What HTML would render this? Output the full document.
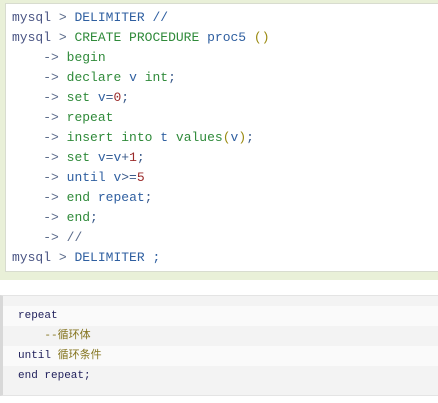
<!DOCTYPE html>
<html><head><meta charset="utf-8"><style>
body{margin:0;width:438px;height:403px;background:#fff;position:relative;overflow:hidden;font-family:"Liberation Mono","Noto Sans CJK SC",monospace}
.outer{position:absolute;left:0;top:0;width:438px;height:280px;background:#e9f0d8}
.inner{position:absolute;left:5px;top:3px;width:440px;height:269px;background:#fff;border:1px solid #d8dccf;box-sizing:border-box}
.code{position:absolute;left:12px;top:8px;font-size:13px;line-height:20px;white-space:pre;color:#3a5a8a}
.m{color:#4a5584}.b{color:#2f5fa0}.g{color:#2f8a3a}.o{color:#9a8a10}.r{color:#9a2a2a}.a{color:#5a6a8a}
.blk{position:absolute;left:0;top:295px;width:438px;height:101px;background:#f3f3f3;border-top:1px solid #e4e4e4;border-bottom:1px solid #e4e4e4;border-left:3px solid #d8d8d8;box-sizing:border-box}
.row{position:absolute;left:0;width:438px;height:20px}
.t{position:absolute;left:18px;top:306px;font-size:11px;line-height:20px;white-space:pre;color:#1e1e5a}
.c{color:#857520}
</style></head><body>
<div class="outer"><div class="inner"></div></div>
<div class="code"><span class="m">mysql</span> <span class="a">&gt;</span> <span class="b">DELIMITER //</span>
<span class="m">mysql</span> <span class="a">&gt;</span> <span class="g">CREATE PROCEDURE</span> <span class="b">proc5</span> <span class="o">()</span>
    <span class="a">-&gt;</span> <span class="g">begin</span>
    <span class="a">-&gt;</span> <span class="g">declare</span> <span class="b">v</span> <span class="g">int</span>;
    <span class="a">-&gt;</span> <span class="g">set</span> <span class="b">v</span>=<span class="r">0</span>;
    <span class="a">-&gt;</span> <span class="g">repeat</span>
    <span class="a">-&gt;</span> <span class="g">insert into</span> <span class="b">t</span> <span class="g">values</span><span class="o">(</span><span class="b">v</span><span class="o">)</span>;
    <span class="a">-&gt;</span> <span class="g">set</span> <span class="b">v</span>=<span class="b">v</span>+<span class="r">1</span>;
    <span class="a">-&gt;</span> <span class="b">until v</span>&gt;=<span class="r">5</span>
    <span class="a">-&gt;</span> <span class="g">end</span> <span class="b">repeat</span>;
    <span class="a">-&gt;</span> <span class="g">end</span>;
    <span class="a">-&gt;</span> <span class="a">//</span>
<span class="m">mysql</span> <span class="a">&gt;</span> <span class="b">DELIMITER ;</span></div>
<div class="blk">
<div class="row" style="top:10px;background:#fafafa"></div>
<div class="row" style="top:30px;background:#f3f3f3"></div>
<div class="row" style="top:50px;background:#fafafa"></div>
<div class="row" style="top:70px;background:#f3f3f3"></div>
</div>
<div class="t">repeat
    <span class="c">--循环体</span>
until <span class="c">循环条件</span>
end repeat;</div>
</body></html>
